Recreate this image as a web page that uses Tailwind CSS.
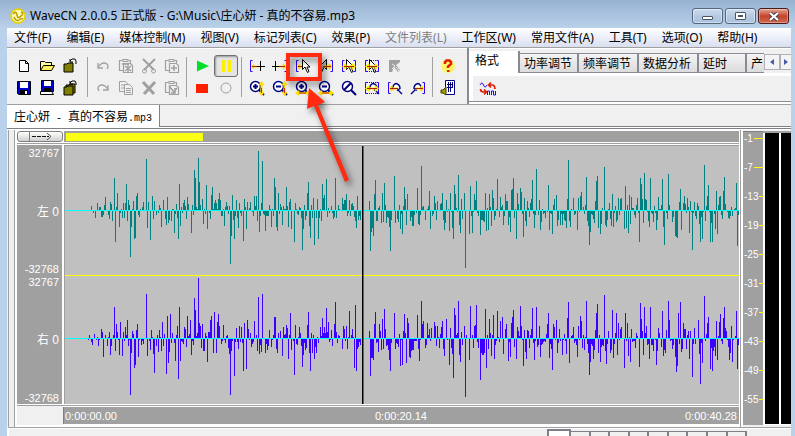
<!DOCTYPE html>
<html lang="zh-CN">
<head>
<meta charset="utf-8">
<title>WaveCN 2.0.0.5</title>
<script src="https://cdn.jsdelivr.net/npm/@tailwindcss/browser@4"></script>
</head>
<body class="relative flex h-screen flex-col overflow-hidden bg-[#b9d1ea] font-['Noto_Sans','Noto_Sans_CJK_SC',sans-serif] text-[12px] leading-4 text-black">

<svg class="hidden">
  <defs>
    <symbol id="new" viewBox="0 0 16 16"><path d="M3.5 2.5h6l3 3v8h-9z" fill="#fff" stroke="#000"/><path d="M9.500 2.500v3h3" fill="none" stroke="#000"/></symbol>
    <symbol id="open" viewBox="0 0 16 16"><path d="M1.500 12.500v-9h4l1 1h6v3" fill="#ffff9c" stroke="#000"/><path d="M1.500 12.500l3-5h11l-3 5z" fill="#ffee60" stroke="#000"/></symbol>
    <symbol id="close" viewBox="0 0 16 16"><path d="M2 6h3l1-1h5v9H2z" fill="#808000" stroke="#000"/><path d="M8 3l2-2h3l1 2v3M8 1v3h3" fill="none" stroke="#000"/></symbol>
    <symbol id="closeall" viewBox="0 0 16 16"><path d="M4 5h3l1-1h5v9H4z" fill="#808000" stroke="#000"/><path d="M2 7h3l1-1h5v9H2z" fill="#808000" stroke="#000"/><path d="M8 3l2-2h3l1 2v2M8 1v3h3" fill="none" stroke="#000"/></symbol>
    <symbol id="save" viewBox="0 0 16 16"><path d="M1.500 1.500h13v13h-12l-1-1z" fill="#0000c8" stroke="#000"/><path d="M4 2h8v6H4z" fill="#fff"/><path d="M4 10h8v4H4z" fill="#000"/><path d="M9 11h2v3H9z" fill="#fff"/></symbol>
    <symbol id="saveas" viewBox="0 0 16 16"><path d="M2.500 0.500h12v11h-11l-1-1z" fill="#0000c8" stroke="#000"/><path d="M5 1h7v5H5z" fill="#fff"/><path d="M5 8h7v3H5z" fill="#000"/><path d="M1.500 11.500h11l2 3h-13z" fill="#fff" stroke="#000"/></symbol>
    <symbol id="undo" viewBox="0 0 16 16"><path d="M3 5v5h5M3 9l3-3q3-2 6 0 2 2 0 5" fill="none" stroke="#a0a0a0" stroke-width="1.300"/></symbol>
    <symbol id="redo" viewBox="0 0 16 16"><path d="M13 5v5H8M13 9l-3-3q-3-2-6 0-2 2 0 5" fill="none" stroke="#a0a0a0" stroke-width="1.300"/></symbol>
    <symbol id="clip" viewBox="0 0 16 16"><path d="M4 2.500H1.500v10H5M5 3.500V1.500h5v2zM11 2.500h1.500V5M5.500 5.500h7l2 2v7h-9z" fill="none" stroke="#a0a0a0" stroke-width="1.200"/></symbol>
    <symbol id="pasteplus" viewBox="0 0 16 16"><use href="#clip"/><path d="M7 10h6M10 7v6" stroke="#a0a0a0" stroke-width="1.500"/></symbol>
    <symbol id="pastestar" viewBox="0 0 16 16"><use href="#clip"/><path d="M7 8l6 5M13 8l-6 5M10 6v8M4 6h7" stroke="#a0a0a0" stroke-width="1.300"/></symbol>
    <symbol id="pastearrow" viewBox="0 0 16 16"><use href="#clip"/><path d="M5 6l6 7M11 8v5H7M13 8l-4 5" fill="none" stroke="#a0a0a0" stroke-width="1.500"/></symbol>
    <symbol id="copy" viewBox="0 0 16 16"><path d="M1.500 1.500h6l2 2v8h-8zM3 5h4M3 8h4" fill="none" stroke="#a0a0a0"/><path d="M6.500 4.500h5l3 3v7h-8zM8 8.500h5M8 10.500h5M8 12.500h5" fill="#f0f0f0" stroke="#a0a0a0"/></symbol>
    <symbol id="cut" viewBox="0 0 16 16"><path d="M2 1l11 11M14 1L3 12" stroke="#a0a0a0" stroke-width="2"/><circle cx="3.500" cy="13" r="2" fill="none" stroke="#a0a0a0"/><circle cx="12.500" cy="13" r="2" fill="none" stroke="#a0a0a0"/></symbol>
    <symbol id="del" viewBox="0 0 16 16"><path d="M2 2l11 12M14 2L3 14" stroke="#a0a0a0" stroke-width="3"/></symbol>
    <symbol id="play" viewBox="0 0 16 16"><path d="M3 2.500l12 5.500-12 5.500z" fill="#00e028"/></symbol>
    <symbol id="pause" viewBox="0 0 16 16"><path d="M4 2h3v12H4zM10 2h3v12h-3z" fill="#ffee00"/></symbol>
    <symbol id="stop" viewBox="0 0 16 16"><path d="M2 4h12v9H2z" fill="#ff2000"/></symbol>
    <symbol id="rec" viewBox="0 0 16 16"><circle cx="8" cy="8" r="5" fill="none" stroke="#a0a0a0"/></symbol>
    <g id="lb"><path d="M3.500 2.500h-2v11h2" fill="none" stroke="#2800ff"/></g>
    <g id="rb"><path d="M12.500 2.500h2v11h-2" fill="none" stroke="#2800ff"/></g>
    <g id="cur"><path d="M7.500 1.500v10l2.500-2.500 2.500 5.500 1.500-1-2-4.500h3z" fill="#fff" stroke="#000"/></g>
    <g id="dbl"><path d="M3 8.500h10M5 6l-2.500 2.500L5 11M11 6l2.500 2.500L11 11" fill="none" stroke="#ffee00" stroke-width="2"/><path d="M3 8.500h10" stroke="#b02000"/></g>
    <symbol id="m1" viewBox="0 0 16 16"><use href="#lb"/><path d="M3 8.500h7M5 6.500L3 8.500l2 2" fill="none" stroke="#ffdf00" stroke-width="1.500"/><path d="M3 8.500h7" stroke="#b02000"/><path d="M11.500 3v10M8 8.500h8" stroke="#000"/></symbol>
    <symbol id="m2" viewBox="0 0 16 16"><use href="#rb"/><path d="M6 8.500h7M11 6.500l2 2-2 2" fill="none" stroke="#ffdf00" stroke-width="1.500"/><path d="M6 8.500h7" stroke="#b02000"/><path d="M3.500 3v10M0 8.500h7" stroke="#000"/></symbol>
    <symbol id="m3" viewBox="0 0 16 16"><use href="#lb"/><path d="M3 8.500h7M5 6L3 8.500 5 11" fill="none" stroke="#ffdf00" stroke-width="2"/><path d="M3 8.500h7" stroke="#b02000"/><use href="#cur"/></symbol>
    <symbol id="m4" viewBox="0 0 16 16"><use href="#rb"/><path d="M8.500 1.500v10L6 9l-2.500 5.500L2 13.500 4 9H1z" fill="#bbb" stroke="#000"/><path d="M5 8.500h8M11 6l2 2.500-2 2.500" fill="none" stroke="#ffdf00" stroke-width="2"/><path d="M5 8.500h8" stroke="#b02000"/></symbol>
    <symbol id="m5" viewBox="0 0 16 16"><use href="#lb"/><use href="#rb"/><path d="M5.500 1.500v10L8 9l2.500 5.500 1.500-1L10 9h3z" fill="#fff" stroke="#000"/><use href="#dbl"/></symbol>
    <symbol id="m6" viewBox="0 0 16 16"><use href="#lb"/><use href="#rb"/><path d="M3 2.500h10M3 13.500h10" stroke="#2800ff" stroke-dasharray="1 1"/><path d="M5.500 1.500v10L8 9l2.500 5.500 1.500-1L10 9h3z" fill="#fff" stroke="#000"/><use href="#dbl"/></symbol>
    <symbol id="m7" viewBox="0 0 16 16"><path d="M2 2h11v2L9 7l4 5-2 2-4-5-2 5H2z" fill="#a0a0a0"/><path d="M5 6l3 2-3 3M9 9l3 4" fill="none" stroke="#eee"/></symbol>
    <g id="lens"><circle cx="6.500" cy="6.500" r="5" fill="#fff" stroke="#000080" stroke-width="1.500"/><path d="M10 10l5 5" stroke="#000080" stroke-width="2"/><path d="M4 6.500h5" stroke="#000080" stroke-width="2"/></g>
    <g id="va"><path d="M12.500 3v11M10.500 5l2-2.500 2 2.500M10.500 12l2 2.500 2-2.500" fill="none" stroke="#ffdf00" stroke-width="2"/><path d="M12.500 8v5" stroke="#d03000"/></g>
    <g id="ha"><path d="M2 13h12M4 11l-2.500 2L4 15M12 11l2.500 2-2.500 2" fill="none" stroke="#ffdf00" stroke-width="2"/><path d="M4 13h7" stroke="#b02000"/></g>
    <symbol id="z1" viewBox="0 0 16 16"><use href="#lens"/><path d="M6.500 4v5" stroke="#000080" stroke-width="2"/><use href="#va"/></symbol>
    <symbol id="z2" viewBox="0 0 16 16"><use href="#lens"/><use href="#va"/></symbol>
    <symbol id="z3" viewBox="0 0 16 16"><use href="#lens"/><path d="M6.500 4v5" stroke="#000080" stroke-width="2"/><use href="#ha"/></symbol>
    <symbol id="z4" viewBox="0 0 16 16"><use href="#lens"/><use href="#ha"/></symbol>
    <symbol id="z5" viewBox="0 0 16 16"><circle cx="6.500" cy="6.500" r="5" fill="#fff" stroke="#000080" stroke-width="1.500"/><path d="M10 10l5 5M3 10l7-7" stroke="#000080" stroke-width="2"/></symbol>
    <g id="half"><path d="M5.500 9.500Q6 4 9 3.500q4 1 4 5l-3 2M10 9l5 5" fill="#fff" stroke="#000080" stroke-width="1.400"/></g>
    <symbol id="z6" viewBox="0 0 16 16"><use href="#lb"/><use href="#rb"/><path d="M3 2.500h10M3 13.500h10" stroke="#2800ff" stroke-dasharray="1 1"/><use href="#half"/><use href="#dbl"/></symbol>
    <symbol id="z7" viewBox="0 0 16 16"><use href="#lb"/><use href="#half"/><path d="M3 8.500h8M5 6L3 8.500 5 11" fill="none" stroke="#ffdf00" stroke-width="2"/><path d="M3 8.500h8" stroke="#b02000"/></symbol>
    <symbol id="z8" viewBox="0 0 16 16"><use href="#rb"/><path d="M11.500 9.500Q11 4 8 3.500q-4 1-4 5l3 2M6 9l-5 5" fill="#fff" stroke="#000080" stroke-width="1.400"/><path d="M5 8.500h8M11 6l2 2.500-2 2.500" fill="none" stroke="#ffdf00" stroke-width="2"/><path d="M5 8.500h8" stroke="#b02000"/></symbol>
    <symbol id="help" viewBox="0 0 16 16"><circle cx="8" cy="8" r="7" fill="#fff36a"/><path d="M5 6V4l1.500-1.500h3L11 4v2L8 8.500V10" fill="none" stroke="#e02000" stroke-width="2.500"/><path d="M7 12h2.500v2H7z" fill="#e02000"/></symbol>
    <symbol id="vol" viewBox="0 0 16 16"><path d="M5.500 0.500h9v14h-9z" fill="#fff" stroke="#000080"/><path d="M8.500 2v10M10.500 2v10M12.500 2v6M7 4.500h6M7 7.500h6" stroke="#000080"/><path d="M1 10h2l3-3v8l-3-2H1z" fill="#a0a000" stroke="#404000"/></symbol>
    <symbol id="conv" viewBox="0 0 18 16"><path d="M1 4q2-4 3.500 0t3.500 0" fill="none" stroke="#2800ff"/><path d="M8.500 14V10h2v4M12.500 14v-4h2v4h2v-4" fill="none" stroke="#2800ff"/><path d="M10 4h4q2 1 2 4M12 1.500L9.500 4 12 6.500M1.500 8q0 3 3 3h2M5 8.500L7.500 11 5 13.500" fill="none" stroke="#e02000" stroke-width="1.700"/></symbol>
  </defs>
</svg>

<header class="flex h-7 shrink-0 items-center bg-linear-to-b from-[#97b2d2] to-[#bad1e9] pt-1 pr-[6px] pl-[10px]">
  <svg class="mr-1 size-4" viewBox="0 0 16 16"><circle cx="8" cy="8" r="7" fill="#fff9b0" stroke="#e8d000" stroke-width="1.500"/><path d="M3 6q3-4 4 1t5 0q2-2-1-3M4 9q2 5 5 3t4-1" fill="none" stroke="#b59b00" stroke-width="1.400"/></svg>
  <h1 class="whitespace-nowrap">WaveCN 2.0.0.5 正式版 - G:\Music\庄心妍 - 真的不容易.mp3</h1>
  <div class="ml-auto flex gap-[2px]">
    <button aria-label="最小化" class="flex h-4 w-[31px] items-center justify-center rounded-[3px] border border-[#53677f] bg-linear-to-b from-[#cddcef] via-[#b5cae2] via-50% to-[#a9c2de] shadow-[inset_0_0_0_1px_#ffffff70]"><span class="mt-1 h-1 w-[11px] rounded-[1px] border border-[#4a5464] bg-white"></span></button>
    <button aria-label="最大化" class="flex h-4 w-[31px] items-center justify-center rounded-[3px] border border-[#53677f] bg-linear-to-b from-[#cddcef] via-[#b5cae2] via-50% to-[#a9c2de] shadow-[inset_0_0_0_1px_#ffffff70]"><span class="flex h-2 w-[11px] items-center justify-center rounded-[1px] border border-[#4a5464] bg-white"><span class="h-[2px] w-[5px] border border-[#4a5464]"></span></span></button>
    <button aria-label="关闭" class="flex h-4 w-[31px] items-center justify-center rounded-[3px] border border-[#4d1a1a] bg-linear-to-b from-[#e2a593] via-[#c5432d] via-50% to-[#cf6a50] shadow-[inset_0_0_0_1px_#ffffff50]"><svg class="h-[9px] w-3" viewBox="0 0 12 9"><path d="M2 1l8 7M10 1L2 8" stroke="#4a3a48" stroke-width="4"/><path d="M2 1l8 7M10 1L2 8" stroke="#fff" stroke-width="2.300"/></svg></button>
  </div>
</header>

<div class="mr-1 ml-[7px] flex flex-1 flex-col bg-[#f0f0f0]">
  <nav class="flex h-[19px] shrink-0 items-center gap-[1px] bg-linear-to-b from-white via-[#e8ecf7] via-60% to-[#d9dff0] whitespace-nowrap">
    <button class="px-[7px]">文件(F)</button>
    <button class="px-[7px]">编辑(E)</button>
    <button class="px-[7px]">媒体控制(M)</button>
    <button class="px-[7px]">视图(V)</button>
    <button class="px-[7px]">标记列表(C)</button>
    <button class="px-[7px]">效果(P)</button>
    <button class="px-[7px] text-[#808080]" disabled>文件列表(L)</button>
    <button class="px-[7px]">工作区(W)</button>
    <button class="px-[7px]">常用文件(A)</button>
    <button class="px-[7px]">工具(T)</button>
    <button class="px-[7px]">选项(O)</button>
    <button class="px-[7px]">帮助(H)</button>
  </nav>

  <div class="flex h-[58px] shrink-0 border-t border-b border-[#a0a0a0] shadow-[inset_0_1px_0_#fff]">
    <div id="tools" class="flex items-center pt-[2px] pl-[5px]"></div>
    <section class="ml-auto flex w-[324px] min-w-0 flex-col border-l-2 border-[#8a8a94] pt-[3px]">
      <div role="tablist" class="flex h-[22px] items-end overflow-hidden font-['Noto_Sans_CJK_SC',sans-serif] whitespace-nowrap">
        <button role="tab" class="h-[22px] w-[51px] shrink-0 border-r-2 border-[#8a8a94] bg-white pb-1 pl-[6px] text-left">格式</button>
        <button role="tab" class="h-5 w-[59px] shrink-0 border-t border-r-2 border-b border-[#8a8a94] bg-linear-to-b from-[#f4f4f4] to-[#dcdcdc] px-[4px] text-left">功率调节</button>
        <button role="tab" class="h-5 w-[60px] shrink-0 border-t border-r-2 border-b border-[#8a8a94] bg-linear-to-b from-[#f4f4f4] to-[#dcdcdc] px-[4px] text-left">频率调节</button>
        <button role="tab" class="h-5 w-[60px] shrink-0 border-t border-r-2 border-b border-[#8a8a94] bg-linear-to-b from-[#f4f4f4] to-[#dcdcdc] px-[4px] text-left">数据分析</button>
        <button role="tab" class="h-5 w-[48px] shrink-0 border-t border-r-2 border-b border-[#8a8a94] bg-linear-to-b from-[#f4f4f4] to-[#dcdcdc] px-[4px] text-left">延时</button>
        <button role="tab" class="h-5 min-w-0 flex-1 overflow-hidden border-t border-b border-[#8a8a94] bg-linear-to-b from-[#f4f4f4] to-[#dcdcdc] px-[4px] text-left">产</button>
        <button aria-label="向左" class="flex h-4 w-4 shrink-0 items-center justify-center self-center border border-[#b0b0b8] bg-[#f4f4f4]"><svg class="size-[6px]" viewBox="0 0 6 6"><path d="M5 0v6L1 3z" fill="#4a5aa8"/></svg></button>
        <button aria-label="向右" class="flex h-4 w-[11px] shrink-0 items-center justify-center self-center border border-r-0 border-[#b0b0b8] bg-[#f4f4f4]"><svg class="size-[6px]" viewBox="0 0 6 6"><path d="M1 0v6l4-3z" fill="#4a5aa8"/></svg></button>
      </div>
      <div class="flex flex-1 items-center border-t-3 border-l-4 border-white pl-[6px]">
        <button aria-label="格式转换"><svg class="h-4 w-[18px]"><use href="#conv"/></svg></button>
      </div>
      <div class="h-[3px] border-t border-[#8a8a94] bg-white"></div>
    </section>
  </div>

  <div class="flex h-[22px] shrink-0">
    <button class="border-r border-[#808088] bg-white px-[7px] pt-[2px] font-['Noto_Sans_CJK_SC',sans-serif] whitespace-nowrap">庄心妍<span class="font-['Liberation_Mono',monospace] text-[10px]"> - </span>真的不容易<span class="font-['Liberation_Mono',monospace] text-[10px]">.mp3</span></button>
    <div class="flex-1 border-b border-[#808088]"></div>
  </div>
  <div class="h-[3px] shrink-0 border-t border-b border-white bg-[#808088]"></div>

  <main class="ml-[1px] flex h-[297px] shrink-0 border-l border-[#a0a0a0] bg-[#f0f0f0]">
    <div class="w-[6px] shrink-0 border-r border-[#a0a0a0] bg-[#f0f0f0]"></div>
    <div class="flex min-w-0 flex-1 flex-col bg-white pl-[2px]">
      <div class="mt-[1px] flex h-[11px] shrink-0 gap-[1px]">
        <button aria-label="播放位置" class="flex w-[46px] shrink-0 items-center justify-center rounded-[3px] border border-[#808080] bg-linear-to-b from-white to-[#cfcfcf]"><svg class="h-[9px] w-6" viewBox="0 0 24 9"><path d="M1.500 0v9" stroke="#6a8a80"/><path d="M4 4.500h17" stroke="#111" stroke-dasharray="4 1"/><path d="M19 1l4 3.500L19 8" fill="none" stroke="#555"/></svg></button>
        <div class="flex flex-1 items-center bg-[#a0a0a0] pl-[2px]"><div class="h-2 w-[20.300%] bg-[#fbff14]"></div></div>
      </div>
      <div class="mt-[1px] h-[1px] shrink-0 bg-[#a0a0a0]"></div>
      <div class="mt-[1px] flex h-[259px] shrink-0 gap-[2px]">
        <div class="flex w-[45px] shrink-0 flex-col bg-[#a0a0a0] pr-[3px] text-right font-['Liberation_Sans','Noto_Sans_CJK_SC',sans-serif] text-[11px] text-white">
          <div class="flex h-[131px] flex-col justify-between"><span>32767</span><span class="text-[12px]">左 0</span><span class="leading-[14px]">-32768</span></div>
          <div class="flex flex-1 flex-col justify-between"><span class="leading-[12px]">32767</span><span class="text-[12px]">右 0</span><span class="leading-3">-32768</span></div>
        </div>
        <div class="min-w-0 flex-1 border-t border-l border-[#a0a0a0] bg-[#c0c0c0]">
          <svg class="block h-[258px] w-full" viewBox="65 146 675 258" preserveAspectRatio="none" shape-rendering="crispEdges">
            <path id="left" fill="#008080"/><path id="right" fill="#3c00ff"/>
            <path d="M65 275h675v1H65z" fill="#ff0"/>
            <path d="M65 210h675v1H65zM65 338h675v1H65z" fill="#0ff"/>
            <path d="M362 146h1v258h-1z" fill="#000"/><path d="M363 146h1v258h-1z" fill="#f02818"/>
          </svg>
        </div>
      </div>
      <div class="mt-[1px] h-[1px] shrink-0 bg-[#a0a0a0]"></div>
      <div class="flex h-[19px] shrink-0">
        <div class="w-[46px] shrink-0 bg-[#f0f0f0]"></div>
        <div class="mt-[1px] flex h-[17px] flex-1 items-center justify-between border-l border-[#808080] bg-[#a0a0a0] pr-[2px] pl-[1px] font-['Liberation_Sans',sans-serif] text-[11px] text-white"><span>0:00:00.00</span><span>0:00:20.14</span><span>0:00:40.28</span></div>
      </div>
    </div>
    <div class="w-[4px] shrink-0 border-l border-white bg-[#a0a0a0] shadow-[inset_-2px_0_0_#fff]"></div>
    <div class="mt-[1px] flex h-[294px] w-5 shrink-0 flex-col border-t border-[#808080] bg-[#a0a0a0] pl-[1px] font-['Liberation_Sans',sans-serif] text-[10px] text-white" id="scale"></div>
    <div class="mt-[1px] flex h-[294px] w-[28px] shrink-0 border-t-2 border-b border-t-[#a0a0a0] border-b-white">
      <div class="w-4 border-r border-l-2 border-l-white bg-black"></div>
      <div class="flex-1 border-l-2 border-white bg-black"></div>
    </div>
  </main>

  <div class="flex min-h-0 flex-1 justify-end overflow-hidden border-t border-l-2 border-t-[#a0a0a0] border-l-white pr-[44px] shadow-[inset_0_1px_0_#fff]">
    <div id="pages" class="flex w-[200px] items-start pt-[3px]"></div>
  </div>
</div>

<svg class="pointer-events-none absolute top-0 left-0 h-[200px] w-[400px] drop-shadow-[3px_4px_3px_#00000080]" viewBox="0 0 400 200" aria-hidden="true">
  <rect x="288" y="55" width="32" height="24" fill="none" stroke="#ff2a10" stroke-width="4"/>
  <path d="M309 88l16 14-7 3 31 75-4 2-31-76-7 3z" fill="#ff2a10"/>
</svg>

<script>
const groups = [
  [["new","新建"],["open","打开"],["close","关闭文件"],["save","保存"],["saveas","另存为"],["closeall","全部关闭"]],
  [["undo","撤销"],["pastestar","混合粘贴"],["cut","剪切"],["pasteplus","粘贴"],["redo","重做"],["copy","复制"],["del","删除"],["pastearrow","粘贴到"]],
  [["play","播放"],["pause","暂停"],["stop","停止"],["rec","录音"]],
  [["m1","选区起点"],["m2","选区终点"],["m3","光标到起点"],["m4","光标到终点"],["m5","选择区间"],["m6","全选"],["m7","取消选择"],null,
   ["z1","垂直放大"],["z2","垂直缩小"],["z3","水平放大"],["z4","水平缩小"],["z5","还原"],["z6","缩放到选区"],["z7","缩放到起点"],["z8","缩放到终点"]],
  [["help","帮助"],["vol","音量"]]
];
const gridClass = ["grid grid-cols-[repeat(3,23px)] pr-[3px]","grid grid-cols-[repeat(4,23px)]","grid grid-cols-[repeat(2,24px)]","grid grid-cols-[repeat(8,23px)]","grid grid-cols-[23px]"];
document.getElementById("tools").innerHTML = groups.map((g, i) =>
  `<div class="${gridClass[i]} auto-rows-[22px]">` + g.map(t => t
    ? `<button aria-label="${t[1]}" class="flex items-center justify-center ${t[0] === "pause" ? "rounded-[3px] border border-[#707070] bg-[#e4e4e4] shadow-[inset_1px_1px_2px_#999]" : ""}"><svg class="size-4"><use href="#${t[0]}"/></svg></button>`
    : "<span></span>").join("") + "</div>"
).join('<span class="mx-[3px] h-10 w-[1px] bg-[#a0a0a0]"></span>');

document.getElementById("scale").innerHTML = [1,7,13,19,25,31,37,43,49,55].map(n =>
  `<div class="flex h-[29px] items-start gap-[1px]"><span class="leading-[13px]">-${n}</span><span class="mt-[6px] h-[1px] flex-1 bg-[#ff0]"></span></div>`).join("");

document.getElementById("pages").innerHTML = '<button class="-mt-[2px] h-3 w-6 shrink-0 border-2 border-b-0 border-[#808088] bg-white" aria-label="1"></button>' +
  Array.from({length: 9}, (_, i) => `<button class="h-3 flex-1 border-t border-r-2 border-[#808088] bg-[#f0f0f0]" aria-label="${i + 2}"></button>`).join("");

// Sample peaks as "column,value": positive rises above the zero line, negative falls below it.
const leftData = `91,4 93,-2 95,-7 97,7 99,3 100,3 101,-6 102,-6 103,-4 104,5 105,13 108,-4 109,-8 110,8 111,6 112,-10 114,32 115,-31 116,3 117,17 119,-16 120,-2 121,1 122,-7 123,7 124,-7 125,7 126,26 127,-10 128,10 129,5 130,-46 131,-16 132,1 133,9 134,-28 135,-27 136,14 137,17 138,-4 139,-6 140,1 142,3 143,8 146,51 147,-17 148,8 150,-29 152,14 153,-8 154,9 156,-4 158,-2 159,5 160,2 161,-16 163,10 165,-8 166,-14 167,13 168,-12 169,-9 171,-10 172,1 173,1 174,-22 175,-3 176,6 177,-7 178,-28 179,26 180,-15 181,3 182,-2 183,7 184,10 185,4 186,-8 187,13 188,6 191,-22 192,5 193,-4 194,40 195,32 196,3 197,1 198,52 199,28
200,5 202,11 203,-13 204,1 205,-3 206,25 207,-18 209,-2 210,-8 211,15 212,23 213,1 214,7 215,10 216,7 217,1 218,11 219,17 220,10 221,-5 222,-5 223,1 224,-15 225,3 226,8 227,4 228,-3 229,4 230,-53 231,-25 232,15 233,-9 234,-28 235,-5 236,10 237,-7 238,-17 239,7 240,-2 241,-5 243,-30 244,11 245,3 246,-18 247,8 249,2 250,8 252,-1 253,-5 254,14 255,4 256,14 257,-10 258,59 259,-21 260,-5 261,7 262,49 263,-3 264,-4 265,-20 266,-5 267,-5 268,-5 269,5 270,1 271,-16 272,1 273,-5 274,32 275,23 276,-16 277,-20 278,17 279,-3 280,6 281,3 282,-14 283,4 284,1 285,1 286,23 287,4 288,-16 289,8 290,11 291,-18 294,-31 295,7 296,1 297,-3 298,-4 299,3 300,2 301,-7 302,-39 303,-18 304,5 305,-9 306,-5 307,17 308,28 309,-15 310,-27 311,5 312,-7 313,12 314,-34 316,-7 317,11 318,-28 319,-7 320,1 321,-10 322,26 323,12 324,15 326,31 327,-6 328,2 329,-2 331,4 332,-2 333,-8 334,-6 335,32 336,-7 338,5 339,1 342,12 343,6 344,10 345,10 346,16 347,-5 348,-2 349,10 350,-5 351,6 352,7 353,4 354,-6 355,-10 356,-17 357,14 358,-9 359,-5 360,-9 369,9 370,-40 371,-21 372,-17 373,-25 374,16 375,30 376,-10 377,-10 378,2 379,4 381,-12 382,17 383,-11 384,27 385,5 386,-12 387,-6 388,-7 389,-16 390,-40 391,-9 394,34 395,-12 397,-8 398,-11 399,5
400,-18 401,-3 402,31 403,-23 404,4 405,23 406,11 407,-14 408,16 411,-10 412,-6 413,-15 414,-15 415,-4 417,-2 418,22 419,-13 420,-14 421,-4 422,44 423,3 424,4 426,-9 428,1 429,4 430,19 431,-18 433,-5 434,-3 435,14 436,7 437,-9 438,9 441,6 442,7 443,17 444,-9 445,-19 446,-12 447,10 448,-1 449,1 450,-20 451,17 452,-1 453,-17 454,-28 455,25 456,16 457,2 458,-1 459,35 460,-14 461,-22 462,11 463,-8 465,17 466,-57 470,-23 471,24 472,-5 473,-22 474,-1 475,16 476,10 477,29 478,-2 479,-5 481,-24 482,-9 483,-9 484,-10 485,-11 486,17 487,-20 488,2 489,-19 490,16 491,3 492,-15 493,20 494,12 495,-9 496,-5 497,1 498,31 500,-6 501,13 502,3 503,5 504,-14 505,-5 506,16 507,9 508,9 509,-14 510,-6 511,-21 512,20 513,21 514,32 515,-7 516,1 517,-28 518,17 519,6 521,22 522,18 523,-3 524,-26 525,12 526,-10 527,-15 528,9 529,2 530,-6 531,7 532,11 533,30 534,-3 535,-17 536,-4 537,41 539,-4 540,10 541,-19 542,-11 543,1 544,-3 545,-2 546,-7 548,-1 549,25 550,-19 551,-2 552,-3 553,-23 554,5 555,11 557,15 558,-15 559,-9 561,-14 562,-3 563,-14 564,-3 565,-9 566,-10 567,-17 568,11 569,50 570,-10 571,-16 572,1 574,12 575,-4 576,-3 578,-19 579,12 580,-1 581,14 582,18 584,3 585,-3 586,5 587,33 588,-10 589,-15 590,-34 591,-21 592,-3 593,-4 594,-8 595,-12 596,9 597,29 598,34 599,-17
601,-23 602,-13 603,2 605,43 606,-14 607,-16 608,-9 609,1 610,7 611,-8 612,-15 613,16 614,-16 615,-2 616,4 617,-11 618,-9 619,12 620,-4 621,11 622,12 625,-18 626,24 627,-17 628,5 629,-22 630,15 631,-13 632,13 633,2 634,2 635,-4 636,-7 637,5 638,12 639,-2 640,-31 641,32 642,26 643,11 644,-12 645,37 646,11 647,10 648,-1 649,-10 650,-16 651,32 652,-2 653,-3 654,-11 655,4 656,-2 657,-19 658,-9 659,13 660,1 661,1 662,5 663,31 664,-16 665,-34 667,-2 668,-8 669,36 670,5 673,-11 674,-6 676,-25 677,-26 678,-27 680,8 681,21 682,-19 684,7 685,14 686,6 687,-2 688,12 689,3 690,-22 691,9 692,-1 693,-39 694,-2 695,8 696,-5 697,-8 698,7 699,4 700,-13 701,-31 702,-6 703,-28 704,-1 705,45 706,-10 707,4 708,14 709,25 710,-1 711,-31 712,-12 713,-31 715,-3 716,-18 717,19 718,-23 719,5 720,13 721,14 722,-4 723,-8 724,19 725,33 726,6 728,-1 729,-7 730,-8 731,-5 732,3 733,-5 735,1 736,2 737,27 738,-35 739,-4`;
const rightData = `88,-1 89,3 91,-3 92,-6 94,4 96,-1 97,1 98,-7 99,-1 101,9 102,6 103,-18 105,3 107,-7 108,1 109,6 110,-16 111,-7 113,3 114,31 115,-12 116,14 117,6 118,-1 119,-16 120,16 122,-17 123,6 124,-2 125,11 126,3 127,18 128,-7 129,-1 130,-56 131,-14 132,7 133,4 134,-29 135,-26 136,8 137,14 138,-18 139,-1 141,-6 142,-2 143,-5 146,44 147,-17 149,-2 150,-11 151,8 152,1 153,-15 154,-34 156,-7 157,3 158,-13 159,8 160,1 161,-12 162,16 163,-7 164,4 166,-35 167,22 168,-24 169,-13 170,24 171,-4 172,5 174,-4 175,-22 176,3 177,12 178,-40 179,31 180,-22 181,-2 182,-3 183,-5 184,11 185,9 186,-8 187,22 188,2 189,4 190,18 191,-16 192,-2 193,-6 194,40 195,28 196,2 197,5 198,60 199,15
200,12 201,-9 202,14 203,-12 204,-12 205,5 206,2 207,-23 208,6 209,6 210,18 211,22 213,-14 214,26 216,-14 217,16 218,24 219,12 221,-5 222,-2 223,13 224,-1 225,-4 226,2 227,3 228,-9 229,-15 230,-56 231,-12 232,-2 234,-37 235,-3 236,10 237,-3 238,-10 239,12 240,-3 241,11 242,-4 243,-32 244,15 246,-30 247,18 248,9 249,-1 250,5 251,-8 252,-5 253,-3 254,17 256,3 257,-12 258,41 259,-15 260,-6 261,-13 262,44 265,-14 266,-5 267,-11 268,-7 269,8 271,-8 272,-1 273,3 274,21 275,21 276,-10 277,-14 278,5 280,7 282,-17 283,11 284,3 285,4 286,13 287,10 288,-20 289,3 290,25 291,-11 293,-2 294,-36 295,13 296,-5 297,-6 298,1 299,11 300,5 301,-7 302,-28 303,-16 304,-4 305,-11 306,-9 307,13 308,26 309,-14 310,-32 311,5 312,-14 313,3 314,-20 315,-8 316,-14 317,1 318,-4 320,11 321,2 322,20 323,5 324,11 325,5 326,30 327,6 328,16 329,-3 330,-1 331,8 332,-7 334,14 335,36 336,6 337,-4 338,3 339,2 342,-10 343,12 344,9 345,-2 346,12 347,-10 348,1 349,27 351,3 352,9 353,1 354,-29 355,33 356,-32 357,-10 358,-8 359,-3 360,-6 369,7 370,-37 371,-19 372,-19 373,-21 374,14 375,26 376,-4 377,-3 378,-13 379,14 380,7 381,-11 382,19 383,-10 384,29 385,9 386,-7 387,-6 388,-11 389,-21 390,-32 391,-4 394,25 395,-10 396,-4 397,-5 398,-8 399,4
400,-27 401,-1 402,35 403,-26 404,7 405,24 406,5 407,-24 408,20 409,15 410,-18 411,-19 412,-12 413,-11 414,-11 415,-2 416,-2 417,-2 418,23 419,-10 420,-22 421,-1 422,37 423,14 424,17 426,-9 427,-6 428,15 429,3 430,9 431,-2 432,10 435,16 436,12 437,-7 438,12 439,1 440,-9 441,4 442,11 443,17 444,-10 445,-17 447,19 448,-1 450,-26 451,10 452,-9 453,-15 454,-39 455,30 456,23 457,3 458,5 459,37 460,-16 461,-23 462,6 463,-6 465,12 466,-58 467,3 470,-21 471,32 473,3 474,-9 475,12 476,13 477,33 478,-3 479,-9 481,-41 482,-14 483,-16 484,-16 485,-14 486,29 487,-29 488,3 489,-10 490,19 491,5 492,-17 493,3 494,23 495,-20 496,-6 497,-2 498,27 499,1 500,-3 501,17 503,21 504,-15 506,9 507,14 509,-22 510,-3 511,-18 512,15 513,21 514,28 515,-8 517,-20 518,11 519,7 520,2 521,32 522,12 523,-1 524,-27 525,8 526,-13 527,-20 528,8 529,7 530,-9 531,3 532,9 533,30 534,-4 535,-21 536,-2 537,31 538,-8 539,-6 540,12 541,-18 542,-6 543,-5 544,-3 545,-2 546,-3 547,4 548,14 549,25 550,-19 551,-5 552,-10 553,-31 554,14 555,11 556,-1 557,18 558,-14 559,-4 560,9 561,-2 563,-16 564,-1 565,4 566,-2 567,-15 568,20 569,36 570,-24 572,2 573,3 574,11 575,-4 576,-2 577,-6 578,-18 579,12 580,-1 581,22 582,17 583,-9 584,3 585,-11 586,1 587,37 588,-5 589,-14 590,-36 591,-23 592,-5 593,-7 594,-20 595,-11 596,8 597,25 598,34 599,-14
600,3 601,-23 602,-8 603,-6 604,-7 605,43 606,-12 607,-25 608,-5 609,7 611,-14 612,-11 613,28 614,-19 615,-5 616,5 617,25 618,-16 619,15 620,-1 621,9 622,11 625,-29 626,25 627,-2 628,15 629,-17 630,1 631,-23 632,9 633,-3 634,-2 635,-2 636,-9 637,5 638,2 640,-28 641,35 642,19 643,7 644,-16 645,31 646,5 647,12 648,-6 649,-5 650,-20 651,31 652,-6 653,-6 654,-12 656,-1 657,-26 658,-12 659,10 660,5 662,-8 663,27 664,-17 665,-11 666,-14 667,8 669,37 670,18 671,-2 672,-1 673,-10 674,-6 676,-18 677,-33 678,-27 679,25 680,-5 681,36 682,-13 683,-10 684,15 685,9 686,9 687,-10 688,3 689,7 690,-20 691,7 693,-38 694,-5 695,10 696,-5 699,18 700,-15 701,-45 702,-4 703,-24 705,42 706,-2 707,4 708,15 709,21 711,-30 712,-9 713,-32 714,-12 715,-8 716,-17 717,17 718,-21 719,2 720,16 721,24 722,-2 723,-5 724,20 725,31 726,10 727,7 728,-1 729,-8 730,-21 731,-14 732,12 733,-23 734,-1 736,2 737,27 738,-30 739,-6`;
const wave = (data, zero) => data.trim().split(/\s+/).map(p => {
  const [x, v] = p.split(",").map(Number);
  return v > 0 ? `M${x} ${zero - v}h1v${v}h-1z` : `M${x} ${zero}h1v${1 - v}h-1z`;
}).join("");
document.getElementById("left").setAttribute("d", wave(leftData, 210));
document.getElementById("right").setAttribute("d", wave(rightData, 338));
</script>
</body>
</html>
